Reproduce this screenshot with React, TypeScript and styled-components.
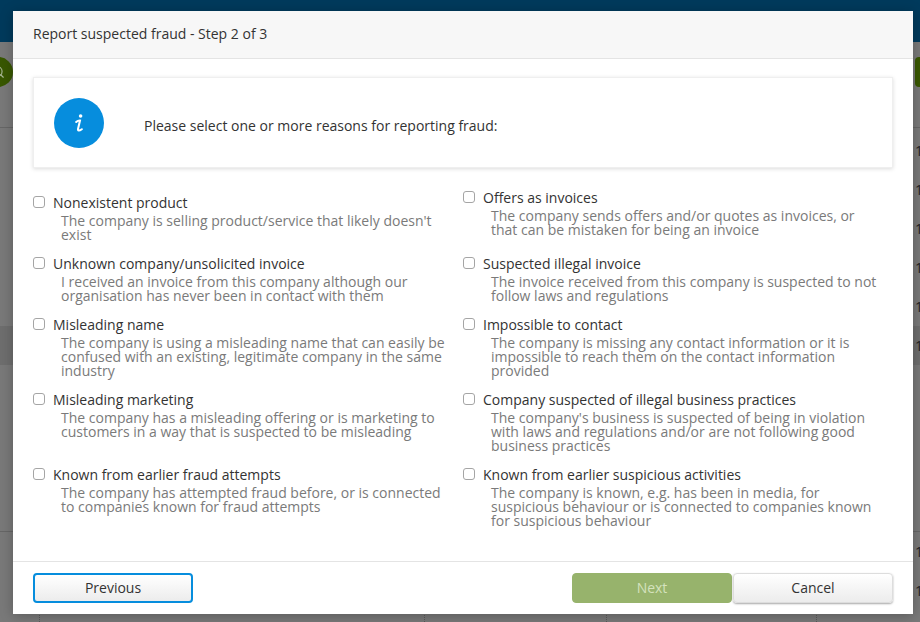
import styled, { createGlobalStyle } from "styled-components";
import { Search } from "lucide-react";

const GlobalStyle = createGlobalStyle`
  html, body {
    margin: 0;
    padding: 0;
    height: 100%;
    overflow: hidden;
  }
  body {
    font-family: "Open Sans", "Liberation Sans", sans-serif;
    color: #333;
  }
`;

const Page = styled.div`
  width: 920px;
  height: 622px;
  position: relative;
  overflow: hidden;
  background: #797979;
`;
const TopBar = styled.div`
  height: 42px;
  background: #003a5c;
`;
const Toolbar = styled.div`
  height: 86px;
  display: flex;
  justify-content: space-between;
  padding-top: 15px;
  box-sizing: border-box;
  border-bottom: 1px solid #666;
`;
const SearchRound = styled.div`
  width: 30px;
  height: 30px;
  margin-left: -17px;
  border-radius: 50%;
  background: #385700;
  color: #a9b796;
  display: flex;
  align-items: center;
  justify-content: center;
`;
const GreenEdge = styled.div`
  width: 20px;
  height: 30px;
  margin-right: -15px;
  border-radius: 4px;
  background: #385700;
`;
const Table = styled.div`
  padding-top: 3px;
`;
const TableRow = styled.div<{ $dark?: boolean }>`
  height: 39px;
  display: flex;
  justify-content: flex-end;
  align-items: center;
  font-size: 14px;
  color: #222;
  background: ${(p) => (p.$dark ? "#6e6e6e" : "transparent")};
`;
const Cell = styled.span`
  width: 5px;
`;
const TableGap = styled.div`
  height: 166px;
  border-bottom: 1px solid #666;
`;
const ColumnRules = styled.div`
  height: 12px;
  display: flex;
`;
const ColumnRule = styled.div<{ $width: number }>`
  width: ${(p) => p.$width}px;
  box-sizing: border-box;
  border-right: 1px dotted #5a5a5a;
`;
const Overlay = styled.div`
  position: absolute;
  inset: 0;
  padding: 11px 7px 8px 13px;
  box-sizing: border-box;
`;
const Modal = styled.div`
  width: 900px;
  height: 603px;
  background: #fff;
  display: flex;
  flex-direction: column;
  box-shadow: 0 2px 12px rgba(0, 0, 0, 0.25);
`;
const Header = styled.div`
  height: 48px;
  box-sizing: border-box;
  padding: 0 20px 3px;
  display: flex;
  align-items: center;
  background: #f7f7f7;
  border-bottom: 1px solid #e4e4e4;
  font-size: 14px;
  color: #333;
`;
const Body = styled.div`
  flex: 1;
  padding: 18px 20px 0;
`;
const InfoBox = styled.div`
  height: 91px;
  box-sizing: border-box;
  display: flex;
  align-items: center;
  gap: 40px;
  padding: 1px 0 0 20px;
  border: 1px solid #efefef;
  box-shadow: 0 1px 4px rgba(0, 0, 0, 0.14);
  font-size: 14px;
  color: #333;
`;
const InfoIcon = styled.div`
  width: 50px;
  height: 50px;
  border-radius: 50%;
  background: #068ddd;
  display: flex;
  align-items: center;
  justify-content: center;
`;
const InfoText = styled.span`
  padding-top: 4px;
`;
const Columns = styled.div`
  display: grid;
  grid-template-columns: 430px 430px;
`;
const Column = styled.div<{ $top: number }>`
  padding-top: ${(p) => p.$top}px;
  display: flex;
  flex-direction: column;
`;
const Reason = styled.label<{ $height: number }>`
  height: ${(p) => p.$height}px;
  display: grid;
  grid-template-columns: 20px 1fr;
  grid-template-rows: 18px auto;
`;
const Check = styled.input`
  appearance: none;
  width: 12px;
  height: 12px;
  margin: 2px 0 0 0;
  border: 1px solid #a5a5a5;
  border-radius: 3px;
  background: #fff;
  box-sizing: border-box;
`;
const ReasonTitle = styled.span`
  font-size: 14px;
  line-height: 18px;
  color: #333;
`;
const ReasonText = styled.span`
  grid-column: 2;
  padding: 2px 0 0 8px;
  width: 392px;
  font-size: 14px;
  line-height: 14px;
  color: #7a7a7a;
`;
const Footer = styled.div`
  height: 53px;
  box-sizing: border-box;
  padding: 11px 20px 0;
  border-top: 1px solid #e4e4e4;
  display: flex;
`;
const Spacer = styled.div`
  flex: 1;
`;
const Button = styled.button<{ $variant?: "focus" | "primary" }>`
  width: 160px;
  height: 30px;
  box-sizing: border-box;
  font-family: inherit;
  font-size: 14px;
  border-radius: 4px;
  padding: 0 0 2px;
  color: ${(p) => (p.$variant === "primary" ? "#d4e2bd" : "#333")};
  background: ${(p) => (p.$variant === "primary" ? "#97b36c" : "linear-gradient(#fff, #ececec)")};
  border: ${(p) =>
    p.$variant === "focus"
      ? "2px solid #068ddd"
      : p.$variant === "primary"
      ? "1px solid #97b36c"
      : "1px solid #ddd"};
  box-shadow: ${(p) => (p.$variant ? "none" : "0 1px 2px rgba(0,0,0,0.35)")};
`;
const CancelWrap = styled.div`
  margin-left: 1px;
`;

const leftReasons = [
  { title: "Nonexistent product", text: "The company is selling product/service that likely doesn't exist", h: 61 },
  { title: "Unknown company/unsolicited invoice", text: "I received an invoice from this company although our organisation has never been in contact with them", h: 61 },
  { title: "Misleading name", text: "The company is using a misleading name that can easily be confused with an existing, legitimate company in the same industry", h: 75 },
  { title: "Misleading marketing", text: "The company has a misleading offering or is marketing to customers in a way that is suspected to be misleading", h: 75 },
  { title: "Known from earlier fraud attempts", text: "The company has attempted fraud before, or is connected to companies known for fraud attempts", h: 60 },
];
const rightReasons = [
  { title: "Offers as invoices", text: "The company sends offers and/or quotes as invoices, or that can be mistaken for being an invoice", h: 66 },
  { title: "Suspected illegal invoice", text: "The invoice received from this company is suspected to not follow laws and regulations", h: 61 },
  { title: "Impossible to contact", text: "The company is missing any contact information or it is impossible to reach them on the contact information provided", h: 75 },
  { title: "Company suspected of illegal business practices", text: "The company's business is suspected of being in violation with laws and regulations and/or are not following good business practices", h: 75 },
  { title: "Known from earlier suspicious activities", text: "The company is known, e.g. has been in media, for suspicious behaviour or is connected to companies known for suspicious behaviour", h: 60 },
];

const ReasonList = ({ items, top }: { items: typeof leftReasons; top: number }) => (
  <Column $top={top}>
    {items.map((r) => (
      <Reason key={r.title} $height={r.h}>
        <Check type="checkbox" />
        <ReasonTitle>{r.title}</ReasonTitle>
        <ReasonText>{r.text}</ReasonText>
      </Reason>
    ))}
  </Column>
);

const App = () => (
  <Page>
    <GlobalStyle />
    <TopBar />
    <Toolbar>
      <SearchRound>
        <Search size={14} />
      </SearchRound>
      <GreenEdge />
    </Toolbar>
    <Table>
      {[0, 1, 2, 3, 4, 5].map((i) => (
        <TableRow key={i} $dark={i === 5}>
          <Cell>1</Cell>
        </TableRow>
      ))}
      <TableGap />
      {[6, 7].map((i) => (
        <TableRow key={i}>
          <Cell>1</Cell>
        </TableRow>
      ))}
      <ColumnRules>
        {[40, 385, 182, 210].map((w) => (
          <ColumnRule key={w} $width={w} />
        ))}
      </ColumnRules>
    </Table>
    <Overlay>
      <Modal>
        <Header>Report suspected fraud - Step 2 of 3</Header>
        <Body>
          <InfoBox>
            <InfoIcon>
              <svg width="9" height="19" viewBox="0 0 9 19">
                <circle cx="5.6" cy="2" r="1.8" fill="#fff" />
                <path d="M1.2 8 C2.4 6.9 3.6 6.5 5 6.6 L3 15 C2.7 16.8 4 17.2 6.8 15.2" fill="none" stroke="#fff" strokeWidth="2" strokeLinecap="round" />
              </svg>
            </InfoIcon>
            <InfoText>Please select one or more reasons for reporting fraud:</InfoText>
          </InfoBox>
          <Columns>
            <ReasonList items={leftReasons} top={26} />
            <ReasonList items={rightReasons} top={21} />
          </Columns>
        </Body>
        <Footer>
          <Button $variant="focus">Previous</Button>
          <Spacer />
          <Button $variant="primary">Next</Button>
          <CancelWrap>
            <Button>Cancel</Button>
          </CancelWrap>
        </Footer>
      </Modal>
    </Overlay>
  </Page>
);

export default App;
